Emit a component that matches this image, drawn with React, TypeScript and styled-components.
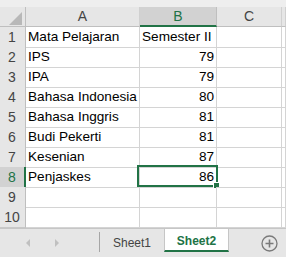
import React from "react";
import styled, { createGlobalStyle, css } from "styled-components";

const GlobalStyle = createGlobalStyle`
  html, body { margin: 0; padding: 0; background: #ffffff; }
  body { font-family: "Liberation Sans", Arial, sans-serif; overflow: hidden; }
`;

const COLS = "26px 114px 77px 65px 1fr";
const GREEN = "#217346";

const Sheet = styled.div`
  width: 286px;
  height: 257px;
  display: flex;
  flex-direction: column;
  overflow: hidden;
  background: #ffffff;
`;

const TopBand = styled.div`
  height: 7px;
  background: #eeeeee;
  flex: none;
`;

const GridArea = styled.div`
  flex: 1;
  overflow: hidden;
  min-height: 0;
`;

const Row = styled.div`
  display: grid;
  grid-template-columns: ${COLS};
  height: 20px;
`;

const Corner = styled.div`
  background: #e6e6e6;
  border-right: 1px solid #bfbfbf;
  border-bottom: 1px solid #bfbfbf;
  position: relative;
  svg { position: absolute; left: 9px; top: 5px; }
`;

const ColHead = styled.div<{ $sel?: boolean }>`
  background: ${(p) => (p.$sel ? "#d2d2d2" : "#e6e6e6")};
  border-right: 1px solid ${(p) => (p.$sel ? "#bfbfbf" : "#d0d0d0")};
  border-bottom: ${(p) => (p.$sel ? `2px solid ${GREEN}` : "1px solid #bfbfbf")};
  color: ${(p) => (p.$sel ? GREEN : "#444444")};
  font-size: 14px;
  line-height: ${(p) => (p.$sel ? "18px" : "19px")};
  text-align: center;
`;

const RowHead = styled.div<{ $sel?: boolean }>`
  background: ${(p) => (p.$sel ? "#d2d2d2" : "#e6e6e6")};
  border-right: ${(p) => (p.$sel ? `2px solid ${GREEN}` : "1px solid #bfbfbf")};
  border-bottom: 1px solid #c8c8c8;
  color: ${(p) => (p.$sel ? GREEN : "#444444")};
  font-size: 14px;
  line-height: 20px;
  text-align: center;
  padding-right: ${(p) => (p.$sel ? "0" : "1px")};
`;

const Cell = styled.div<{ $num?: boolean }>`
  border-right: 1px solid #d4d4d4;
  border-bottom: 1px solid #d4d4d4;
  font-size: 13.6px;
  line-height: 20px;
  color: #000000;
  white-space: nowrap;
  overflow: visible;
  padding: 0 ${(p) => (p.$num ? "2px" : "0")} 0 ${(p) => (p.$num ? "0" : "2px")};
  text-align: ${(p) => (p.$num ? "right" : "left")};
  position: relative;
`;

const Selection = styled.div`
  position: absolute;
  left: -3px;
  top: -2px;
  width: 81px;
  height: 22px;
  box-sizing: border-box;
  border: 2px solid ${GREEN};
  pointer-events: none;
`;

const Handle = styled.div`
  position: absolute;
  right: -4px;
  bottom: -4px;
  width: 5px;
  height: 5px;
  background: ${GREEN};
  border: 1px solid #ffffff;
`;

const TabBar = styled.div`
  flex: none;
  height: 29px;
  box-sizing: border-box;
  border-top: 1px solid #c6c6c6;
  background: #e6e6e6;
  display: flex;
  align-items: flex-start;
`;

const Nav = styled.div`
  width: 99px;
  height: 28px;
  display: flex;
  align-items: center;
  padding-left: 26px;
  gap: 25px;
  box-sizing: border-box;
`;

const Arrow = styled.div<{ $dir: "left" | "right" }>`
  width: 0;
  height: 0;
  border-top: 4px solid transparent;
  border-bottom: 4px solid transparent;
  ${(p) =>
    p.$dir === "left"
      ? css`border-right: 4px solid #c0c0c0;`
      : css`border-left: 4px solid #c0c0c0;`}
`;

const Separator = styled.div`
  width: 1px;
  height: 20px;
  margin-top: 3px;
  background: #a6a6a6;
`;

const Tab = styled.div<{ $active?: boolean }>`
  height: 23px;
  box-sizing: border-box;
  display: flex;
  align-items: center;
  justify-content: center;
  font-size: 12px;
  ${(p) =>
    p.$active
      ? css`
          width: 65px;
          background: #ffffff;
          border-left: 1px solid #c6c6c6;
          border-right: 1px solid #c6c6c6;
          border-bottom: 2px solid ${GREEN};
          color: ${GREEN};
          font-weight: bold;
          padding-top: 2px;
        `
      : css`
          width: 64px;
          color: #444444;
          padding-top: 4px;
        `}
`;

const Spacer = styled.div`
  flex: 1;
`;

const AddButton = styled.div`
  width: 17px;
  height: 17px;
  margin: 6px 8px 0 0;
  svg { display: block; }
`;

const data: [string, number][] = [
  ["IPS", 79],
  ["IPA", 79],
  ["Bahasa Indonesia", 80],
  ["Bahasa Inggris", 81],
  ["Budi Pekerti", 81],
  ["Kesenian", 87],
  ["Penjaskes", 86],
];

export default function App() {
  const rows: { a: string; b: string; num: boolean }[] = [
    { a: "Mata Pelajaran", b: "Semester II", num: false },
    ...data.map(([a, b]) => ({ a, b: String(b), num: true })),
    { a: "", b: "", num: true },
    { a: "", b: "", num: true },
  ];
  return (
    <Sheet>
      <GlobalStyle />
      <TopBand />
      <GridArea>
        <Row>
          <Corner>
            <svg width="13" height="13" viewBox="0 0 13 13">
              <polygon points="13,0 13,13 0,13" fill="#b8b8b8" />
            </svg>
          </Corner>
          <ColHead>A</ColHead>
          <ColHead $sel>B</ColHead>
          <ColHead>C</ColHead>
          <ColHead />
        </Row>
        {rows.map((r, i) => {
          const sel = i === 7;
          return (
            <Row key={i}>
              <RowHead $sel={sel}>{i + 1}</RowHead>
              <Cell>{r.a}</Cell>
              <Cell $num={r.num}>
                {r.b}
                {sel && (
                  <Selection>
                    <Handle />
                  </Selection>
                )}
              </Cell>
              <Cell />
              <Cell />
            </Row>
          );
        })}
      </GridArea>
      <TabBar>
        <Nav>
          <Arrow $dir="left" />
          <Arrow $dir="right" />
        </Nav>
        <Separator />
        <Tab>Sheet1</Tab>
        <Tab $active>Sheet2</Tab>
        <Spacer />
        <AddButton>
          <svg width="17" height="17" viewBox="0 0 17 17">
            <circle cx="8.5" cy="8.5" r="7.5" fill="none" stroke="#7a7a7a" strokeWidth="1.3" />
            <path d="M8.5 4.5v8M4.5 8.5h8" stroke="#7a7a7a" strokeWidth="1.6" />
          </svg>
        </AddButton>
      </TabBar>
    </Sheet>
  );
}
